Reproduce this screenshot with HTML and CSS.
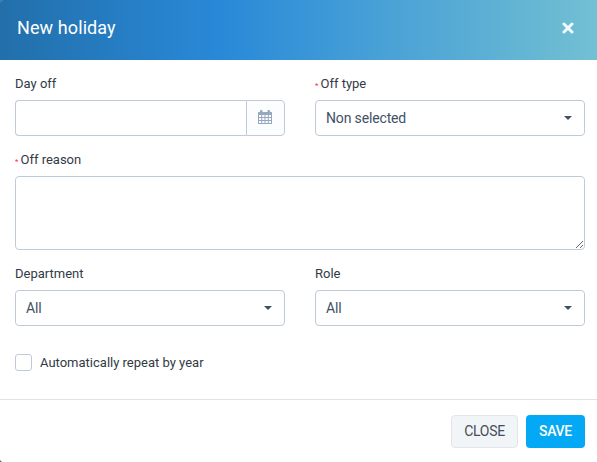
FILE: index.html
```html
<!DOCTYPE html>
<html>
<head>
  <meta charset="utf-8">
  <title>New holiday</title>
  <link rel="stylesheet" href="styles.css">
</head>
<body>
<div class="modal-content">
  <div class="modal-header">
    <h4 class="modal-title">New holiday</h4>
    <button type="button" class="close" aria-label="Close">
      <svg width="12" height="12" viewBox="0 0 12 12"><path d="M2 2l8 8M10 2l-8 8"/></svg>
    </button>
  </div>
  <div class="modal-body">
    <div class="row">
      <div class="form-group">
        <label for="day_off">Day off</label>
        <div class="input-group">
          <input type="text" id="day_off" class="form-control">
          <div class="input-group-addon">
            <svg width="14" height="14" viewBox="0 0 14 14">
              <path fill-rule="evenodd" d="M0 2.6Q0 2 .6 2H2V.9Q2 0 2.9 0h.7q.9 0 .9.9V2h5V.9q0-.9.9-.9h.7q.9 0 .9.9V2h1.4q.6 0 .6.6v10.8q0 .6-.6.6H.6q-.6 0-.6-.6zM1 5v2h2.2V5zm3.2 0v2h2.3V5zm3.3 0v2h2.3V5zm3.3 0v2H13V5zM1 8v2h2.2V8zm3.2 0v2h2.3V8zm3.3 0v2h2.3V8zm3.3 0v2H13V8zM1 11v2h2.2v-2zm3.2 0v2h2.3v-2zm3.3 0v2h2.3v-2zm3.3 0v2H13v-2z"/>
            </svg>
          </div>
        </div>
      </div>
      <div class="form-group">
        <label><small class="req">* </small>Off type</label>
        <button type="button" class="form-control select">Non selected<span class="caret"></span></button>
      </div>
    </div>
    <div class="form-group">
      <label for="off_reason"><small class="req">* </small>Off reason</label>
      <textarea id="off_reason" class="form-control"></textarea>
    </div>
    <div class="row">
      <div class="form-group">
        <label>Department</label>
        <button type="button" class="form-control select">All<span class="caret"></span></button>
      </div>
      <div class="form-group">
        <label>Role</label>
        <button type="button" class="form-control select">All<span class="caret"></span></button>
      </div>
    </div>
    <div class="checkbox">
      <input type="checkbox" id="repeat_by_year">
      <label for="repeat_by_year">Automatically repeat by year</label>
    </div>
  </div>
  <div class="modal-footer">
    <button type="button" class="btn btn-default">Close</button>
    <button type="submit" class="btn btn-info">Save</button>
  </div>
</div>
</body>
</html>
```

FILE: styles.css
```css
* {
  box-sizing: border-box;
}
body {
  margin: 0;
  background: #475569;
  font-family: Roboto, sans-serif;
  font-size: 13px;
  color: #323a45;
}
button,
input,
textarea {
  font-family: inherit;
  margin: 0;
}
.modal-content {
  height: 462px;
  background: #fff;
  border-radius: 3px 0 0 3px;
  overflow: hidden;
}
.modal-header {
  display: flex;
  align-items: center;
  justify-content: space-between;
  height: 60px;
  padding: 0 23px 4px 17px;
  background: linear-gradient(to right, #226faa 0, #2989d8 37%, #72c0d3 100%);
}
.modal-title {
  margin: 0;
  padding-bottom: 2px;
  font-size: 18px;
  font-weight: 400;
  letter-spacing: .1px;
  color: #fff;
}
.close {
  display: flex;
  padding: 0;
  border: 0;
  background: none;
}
.close svg {
  stroke: #f3fafd;
  stroke-width: 3;
  stroke-linecap: round;
}
.modal-body {
  height: 339px;
  padding: 15px 12px 15px 15px;
}
.row {
  display: grid;
  grid-template-columns: 1fr 1fr;
  gap: 30px;
}
.form-group {
  margin-bottom: 15px;
}
.form-group label {
  display: block;
  height: 18px;
  line-height: 18px;
  margin-bottom: 7px;
}
.req {
  font-size: 8px;
  color: #fc2d42;
}
.form-control {
  display: block;
  width: 100%;
  height: 36px;
  padding: 6px 10px;
  border: 1px solid #bfcbd9;
  border-radius: 4px;
  background: #fff;
  color: #494949;
  font-size: 14px;
  outline: none;
}
textarea.form-control {
  height: 74px;
  resize: vertical;
}
.input-group {
  display: flex;
}
.input-group .form-control {
  flex: 1;
  min-width: 0;
  border-right: 0;
  border-radius: 4px 0 0 4px;
}
.input-group-addon {
  display: flex;
  align-items: center;
  justify-content: center;
  width: 39px;
  padding: 0 1px 2px 0;
  border: 1px solid #bfcbd9;
  border-radius: 0 4px 4px 0;
  background: #fbfdff;
}
.input-group-addon svg {
  fill: #97a8be;
}
.select {
  display: flex;
  align-items: center;
  justify-content: space-between;
  padding-right: 12px;
  letter-spacing: -.15px;
  color: #415165;
}
.caret {
  border-top: 4px solid #415165;
  border-left: 4px solid transparent;
  border-right: 4px solid transparent;
}
.checkbox {
  display: flex;
  align-items: center;
  gap: 8px;
  margin-top: 13px;
}
.checkbox input {
  appearance: none;
  width: 17px;
  height: 17px;
  border: 1px solid #bfcbd9;
  border-radius: 3px;
  background: #fff;
}
.modal-footer {
  display: flex;
  justify-content: flex-end;
  gap: 8px;
  padding: 15px 12px;
  border-top: 1px solid #e0e4e8;
}
.btn {
  height: 33px;
  padding: 0 12px 2px;
  border: 1px solid transparent;
  border-radius: 4px;
  font-size: 14px;
  letter-spacing: -.3px;
  text-transform: uppercase;
}
.btn-default {
  width: 67px;
  border-color: #e0e6ec;
  background: #f1f5f7;
  color: #464e59;
}
.btn-info {
  width: 59px;
  background: #03a9f4;
  color: #fff;
  font-weight: 500;
}
```
